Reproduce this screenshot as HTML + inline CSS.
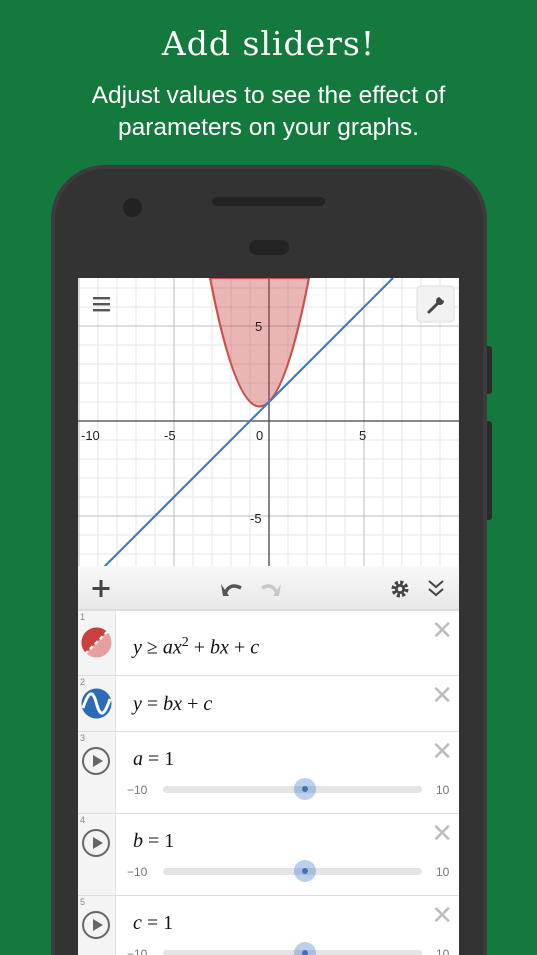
<!DOCTYPE html>
<html style="width:537px;height:955px;overflow:hidden"><head><meta charset="utf-8"><style>
*{margin:0;padding:0;box-sizing:border-box}
body{width:537px;height:955px;overflow:hidden;background:#13793d;position:relative;font-family:"Liberation Sans",sans-serif}
.abs{position:absolute}
.t1{left:0;width:537px;top:24px;text-align:center;color:#fff;font-family:"DejaVu Serif","Liberation Serif",serif;font-size:33px;letter-spacing:1px}
.t2{left:0;width:537px;top:80px;text-align:center;color:#fff;font-size:24.5px;line-height:32px}
.math{font-family:"Liberation Serif",serif;font-style:italic;font-size:20px;color:#111}
.math .u{font-style:normal}
.row{position:absolute;left:78px;width:381px;background:#fff;border-top:1px solid #ddd}
.gut{position:absolute;left:0;top:0;bottom:0;width:38px;background:#f4f4f4;border-right:1px solid #e2e2e2}
.num{position:absolute;left:2px;top:1px;font-size:9px;color:#888}
.x{position:absolute;right:6px;top:6px;font-size:26px;color:#bdbdbd;line-height:26px}
.play{position:absolute;left:4px;width:28px;height:28px;border:2px solid #666;border-radius:50%}
.play:after{content:"";position:absolute;left:9px;top:6px;border-left:10px solid #666;border-top:6px solid transparent;border-bottom:6px solid transparent}
.track{position:absolute;left:85px;width:259px;height:7px;background:#e4e4e4;border-radius:4px}
.thumb{position:absolute;left:216px;width:22px;height:22px;border-radius:50%;background:rgba(59,120,200,.35)}
.thumb:after{content:"";position:absolute;left:8px;top:8px;width:6px;height:6px;border-radius:50%;background:#3a74c0}
.lo,.hi{position:absolute;font-size:12px;color:#777}
</style></head><body>
<div class="abs t1">Add sliders!</div>
<div class="abs t2">Adjust values to see the effect of<br>parameters on your graphs.</div>

<div class="abs" style="left:486px;top:346px;width:6px;height:48px;background:#2a2a2a;border-radius:0 3px 3px 0"></div>
<div class="abs" style="left:486px;top:421px;width:6px;height:99px;background:#2a2a2a;border-radius:0 3px 3px 0"></div>
<div class="abs" style="left:51px;top:165px;width:436px;height:790px;background:#333;border:4px solid #3c3c3c;border-bottom:none;border-radius:54px 54px 0 0"></div>
<div class="abs" style="left:123px;top:198px;width:19px;height:19px;border-radius:50%;background:#222"></div>
<div class="abs" style="left:212px;top:197px;width:113px;height:9px;border-radius:5px;background:#232323"></div>
<div class="abs" style="left:249px;top:240px;width:40px;height:15px;border-radius:8px;background:#232323"></div>

<svg class="abs" style="left:0;top:0" width="537" height="955">
<defs><clipPath id="c"><rect x="78" y="278" width="381" height="290"/></clipPath></defs>
<rect x="78" y="278" width="381" height="677" fill="#fff"/>
<g clip-path="url(#c)">
<g stroke="#e6e6e6" stroke-width="1">
<path d="M79 278V568M98 278V568M117 278V568M136 278V568M155 278V568M174 278V568M193 278V568M212 278V568M231 278V568M250 278V568M269 278V568M288 278V568M307 278V568M326 278V568M345 278V568M364 278V568M383 278V568M402 278V568M421 278V568M440 278V568M459 278V568"/>
<path d="M78 288H459M78 307H459M78 326H459M78 345H459M78 364H459M78 383H459M78 402H459M78 421H459M78 440H459M78 459H459M78 478H459M78 497H459M78 516H459M78 535H459M78 554H459"/>
</g>
<g stroke="#bbb" stroke-width="1"><path d="M79 278V568M174 278V568M364 278V568M78 326H459M78 516H459"/></g>
<g stroke="#444" stroke-width="1.3"><path d="M269 278V568M78 421H459"/></g>
<path d="M210.1 278 Q259.5 535 308.9 278Z" fill="rgba(200,60,60,.38)" stroke="#c9514e" stroke-width="2.2"/>
<path d="M103 568L393 278" stroke="#3f7cc0" stroke-width="2.2"/>
<g font-family="Liberation Sans,sans-serif" font-size="13" fill="#222">
<text x="81" y="440">-10</text><text x="164" y="440">-5</text><text x="256" y="440">0</text><text x="359" y="440">5</text>
<text x="255" y="331">5</text><text x="250" y="523">-5</text></g>
<g fill="#555"><rect x="93" y="297" width="17" height="2.4"/><rect x="93" y="303" width="17" height="2.4"/><rect x="93" y="309" width="17" height="2.4"/></g>
<rect x="417" y="286" width="37" height="36" rx="4" fill="#f2f2f2" stroke="#ddd"/>
<path d="M429 312L437 304" stroke="#444" stroke-width="3" stroke-linecap="round"/>
<circle cx="440" cy="301" r="4" fill="#444"/><path d="M440 296L444 300" stroke="#f2f2f2" stroke-width="2.5"/>
</g>
<defs><linearGradient id="tb" x1="0" y1="0" x2="0" y2="1"><stop offset="0" stop-color="#f8f8f8"/><stop offset="1" stop-color="#e8e8e8"/></linearGradient></defs>
<rect x="78" y="566" width="381" height="44" fill="url(#tb)"/>
<line x1="78" y1="610" x2="459" y2="610" stroke="#d0d0d0"/>
<path d="M101 580V597M92.5 588.5H109.5" stroke="#444" stroke-width="3"/>
<path d="M225 594 Q229 582 241 588" fill="none" stroke="#555" stroke-width="3.5"/><path d="M221 584L229 596L223 596Z" fill="#555"/>
<path d="M262 588 Q273 582 277 594" fill="none" stroke="#c8c8c8" stroke-width="3.5"/><path d="M281 584L273 596L279 596Z" fill="#c8c8c8"/>
<circle cx="400" cy="589" r="6.5" fill="none" stroke="#444" stroke-width="4" stroke-dasharray="3 2.1"/><circle cx="400" cy="589" r="5" fill="#444"/><circle cx="400" cy="589" r="2.3" fill="#eee"/>
<path d="M429 581L436 587L443 581M429 589L436 595L443 589" fill="none" stroke="#444" stroke-width="2"/>
</svg>

<div class="row" style="top:610px;height:65px"><div class="gut"></div><span class="num">1</span>
<svg class="abs" style="left:3px;top:16px" width="31" height="31"><defs><clipPath id="cc"><circle cx="15.5" cy="15.5" r="15"/></clipPath></defs><g clip-path="url(#cc)"><rect width="31" height="31" fill="#e5a0a0"/><path d="M0 0H31L0 31Z" fill="#c9403d"/><path d="M4 27L27 4" stroke="#fff" stroke-width="2.5" stroke-dasharray="4 3"/></g></svg>
<div class="abs math" style="left:55px;top:24px">y <span class="u">≥</span> ax<sup style="font-size:14px;font-style:normal">2</sup> <span class="u">+</span> bx <span class="u">+</span> c</div><span class="x">✕</span></div>
<div class="row" style="top:675px;height:56px"><div class="gut"></div><span class="num">2</span>
<svg class="abs" style="left:3px;top:12px" width="31" height="31"><circle cx="15.5" cy="15.5" r="15" fill="#2a6cb8"/><path d="M2 20 C8 2 12 2 15.5 15.5 S23 29 29 11" fill="none" stroke="#fff" stroke-width="3"/></svg>
<div class="abs math" style="left:55px;top:17px">y <span class="u">=</span> bx <span class="u">+</span> c</div><span class="x">✕</span></div>

<div class="row" style="top:731px;height:82px"><div class="gut"></div><span class="num">3</span><div class="play" style="top:15px"></div>
<div class="abs math" style="left:55px;top:16px">a <span class="u">=</span> <span class="u">1</span></div><span class="x">✕</span>
<span class="lo" style="left:49px;top:51px">−10</span><div class="track" style="top:54px"></div><div class="thumb" style="top:46px"></div><span class="hi" style="left:358px;top:51px">10</span></div>
<div class="row" style="top:813px;height:82px"><div class="gut"></div><span class="num">4</span><div class="play" style="top:15px"></div>
<div class="abs math" style="left:55px;top:16px">b <span class="u">=</span> <span class="u">1</span></div><span class="x">✕</span>
<span class="lo" style="left:49px;top:51px">−10</span><div class="track" style="top:54px"></div><div class="thumb" style="top:46px"></div><span class="hi" style="left:358px;top:51px">10</span></div>
<div class="row" style="top:895px;height:60px;overflow:hidden"><div class="gut"></div><span class="num">5</span><div class="play" style="top:15px"></div>
<div class="abs math" style="left:55px;top:16px">c <span class="u">=</span> <span class="u">1</span></div><span class="x">✕</span>
<span class="lo" style="left:49px;top:51px">−10</span><div class="track" style="top:54px"></div><div class="thumb" style="top:46px"></div><span class="hi" style="left:358px;top:51px">10</span></div>
</body></html>
